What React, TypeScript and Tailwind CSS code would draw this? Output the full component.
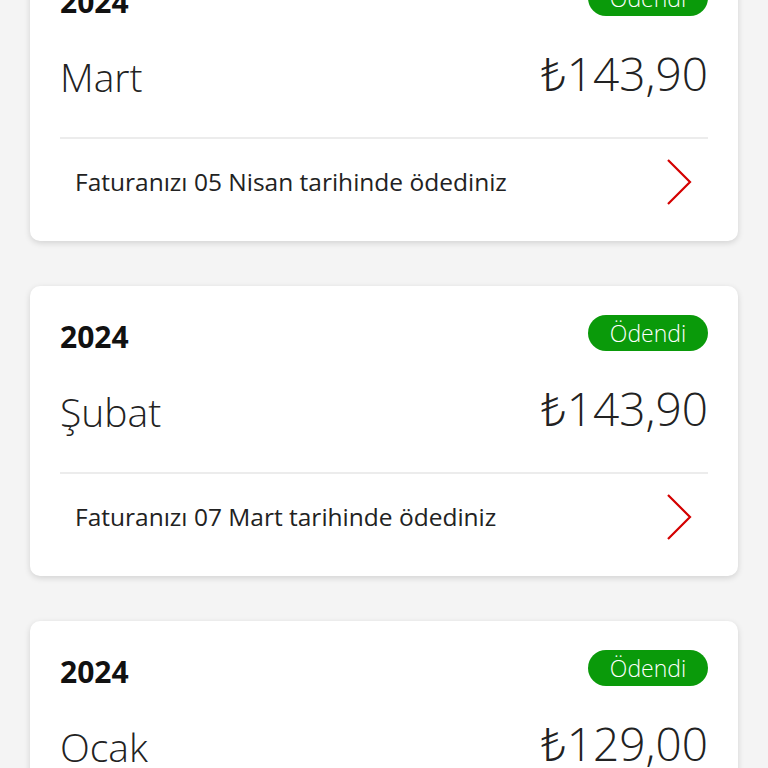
import React from "react";

type Bill = { year: string; month: string; amount: string; note: string };

const bills: Bill[] = [
  { year: "2024", month: "Mart", amount: "₺143,90", note: "Faturanızı 05 Nisan tarihinde ödediniz" },
  { year: "2024", month: "Şubat", amount: "₺143,90", note: "Faturanızı 07 Mart tarihinde ödediniz" },
  { year: "2024", month: "Ocak", amount: "₺129,00", note: "Faturanızı 05 Şubat tarihinde ödediniz" },
];

function Chevron() {
  return (
    <svg width="26" height="46" viewBox="0 0 26 46" fill="none">
      <path d="M2 1 L24 23 L2 45" stroke="#d40000" strokeWidth="2.2" strokeLinejoin="miter" />
    </svg>
  );
}

function Card({ bill }: { bill: Bill }) {
  return (
    <div className="bg-white rounded-[10px] shadow-[0_2px_6px_rgba(0,0,0,0.14)] h-[290px] px-[30px] pt-[29px] flex flex-col shrink-0">
      <div className="flex items-center justify-between h-[36px] shrink-0">
        <span className="text-[30px] font-bold text-[#111] leading-none mt-[8px]">{bill.year}</span>
        <span className="bg-[#0a9a0a] text-white rounded-full w-[120px] h-[36px] flex items-center justify-center text-[23px] font-light leading-none">
          Ödendi
        </span>
      </div>
      <div className="flex items-end justify-between h-[121px] pb-[41px] shrink-0">
        <span className="text-[39px] font-light text-[#222] leading-none">{bill.month}</span>
        <span className="text-[46px] font-light text-[#222] leading-none">{bill.amount}</span>
      </div>
      <div className="h-[2px] bg-[#ececec] shrink-0" />
      <div className="flex items-center justify-between h-[86px] pl-[15px] pr-[16px] shrink-0">
        <span className="text-[24.5px] text-[#222] leading-none">{bill.note}</span>
        <Chevron />
      </div>
    </div>
  );
}

export default function App() {
  return (
    <div
      className="w-[768px] h-[768px] overflow-hidden bg-[#f4f4f4]"
      style={{ fontFamily: '"Open Sans", "Noto Sans", sans-serif' }}
    >
      <div className="flex flex-col gap-[45px] px-[30px] -mt-[49px]">
        {bills.map((b, i) => (
          <Card key={i} bill={b} />
        ))}
      </div>
    </div>
  );
}
